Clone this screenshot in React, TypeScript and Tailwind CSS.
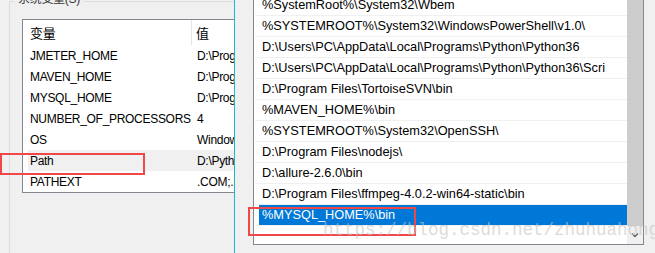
const sysVars = [
  { name: "JMETER_HOME", value: "D:\\Program Files\\apache-jmeter" },
  { name: "MAVEN_HOME", value: "D:\\Program Files\\apache-maven" },
  { name: "MYSQL_HOME", value: "D:\\Program Files\\mysql" },
  { name: "NUMBER_OF_PROCESSORS", value: "4" },
  { name: "OS", value: "Windows_NT" },
  { name: "Path", value: "D:\\Python36\\Scripts" },
  { name: "PATHEXT", value: ".COM;.EXE;.BAT" },
];

const paths = [
  "%SystemRoot%\\System32\\Wbem",
  "%SYSTEMROOT%\\System32\\WindowsPowerShell\\v1.0\\",
  "D:\\Users\\PC\\AppData\\Local\\Programs\\Python\\Python36",
  "D:\\Users\\PC\\AppData\\Local\\Programs\\Python\\Python36\\Scri",
  "D:\\Program Files\\TortoiseSVN\\bin",
  "%MAVEN_HOME%\\bin",
  "%SYSTEMROOT%\\System32\\OpenSSH\\",
  "D:\\Program Files\\nodejs\\",
  "D:\\allure-2.6.0\\bin",
  "D:\\Program Files\\ffmpeg-4.0.2-win64-static\\bin",
  "%MYSQL_HOME%\\bin",
];

const uiFont = "font-['Liberation_Sans','Noto_Sans_CJK_SC',sans-serif]";

export default function App() {
  return (
    <div
      className={`relative flex h-[253px] w-[655px] overflow-hidden bg-[#f0f0f0] text-black ${uiFont}`}
    >
      {/* System variables pane (behind the dialog) */}
      <div className="w-[234px] shrink-0 overflow-hidden pt-[1px] pl-[9px] text-[12px] tracking-[-0.3px]">
        <div className="relative h-[300px] w-[300px] border-l border-t border-[#dcdcdc] pl-[12px] pt-[17px]">
          <span className="absolute -top-[10px] left-[4px] bg-[#f0f0f0] px-[4px] leading-[14px] text-[#333]">
            系统变量(S)
          </span>
          <div className="w-[260px] border border-[#828790] bg-white">
            {/* header */}
            <div className="flex h-[25px] items-center font-['Noto_Sans_CJK_SC',sans-serif] text-[13px]">
              <div className="flex h-full w-[169px] shrink-0 items-center border-r border-[#e5e5e5] pl-[7px]">
                变量
              </div>
              <div className="pl-[4px]">值</div>
            </div>
            {sysVars.map((v) => (
              <div
                key={v.name}
                className={`ml-[5px] flex h-[21px] items-center ${
                  v.name === "Path" ? "bg-[#f0f0f0]" : ""
                }`}
              >
                <div className="w-[164px] shrink-0 overflow-hidden whitespace-nowrap pl-[2px]">
                  {v.name}
                </div>
                <div className="whitespace-nowrap pl-[5px]">{v.value}</div>
              </div>
            ))}
          </div>
        </div>
      </div>

      {/* Edit environment variable dialog */}
      <div className="flex-1 border-l border-[#1cb6cc] bg-[#f0f0f0] pl-[18px] text-[12.75px]">
        <div className="-mt-[6px] flex h-[251px] w-[391px] border border-[#828790] bg-white">
          <div className="min-w-0 flex-1 overflow-hidden pl-[1px]">
            {paths.map((p, i) => (
              <div key={p} className="h-[21px] border-b border-[#f0f0f0]">
                {i === paths.length - 1 ? (
                  <div className="ml-[4px] flex h-[20px] items-center whitespace-nowrap bg-[#0078d7] pl-[3px] text-white">
                    {p}
                  </div>
                ) : (
                  <div className="flex h-[20px] items-center whitespace-nowrap pl-[7px]">
                    {p}
                  </div>
                )}
              </div>
            ))}
          </div>
          {/* scrollbar */}
          <div className="flex w-[16px] shrink-0 flex-col bg-[#f0f0f0]">
            <div className="flex-1 bg-[#cdcdcd]" />
            <div className="flex h-[18px] items-center justify-center">
              <svg width="8" height="6" viewBox="0 0 8 6">
                <path d="M1 1.5 L4 4.5 L7 1.5" fill="none" stroke="#606060" strokeWidth="1.3" />
              </svg>
            </div>
          </div>
        </div>
      </div>

      {/* annotations */}
      <div className="absolute left-0 top-[153px] h-[22px] w-[145px] border-2 border-[#f04848]" />
      <div className="absolute left-[248px] top-[207px] h-[29px] w-[168px] border-2 border-[#f04848]" />
      <div className="pointer-events-none absolute left-[323px] top-[219px] whitespace-nowrap font-['Liberation_Mono',monospace] text-[17.5px] leading-[22px] text-[#c4c4c4]/60">
        https://blog.csdn.net/zhuhuahong
      </div>
    </div>
  );
}
